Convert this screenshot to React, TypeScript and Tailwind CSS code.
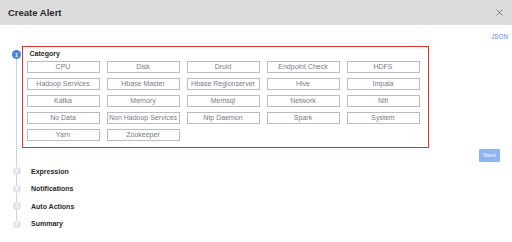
import React from "react";

const categories = [
  "CPU", "Disk", "Druid", "Endpoint Check", "HDFS",
  "Hadoop Services", "Hbase Master", "Hbase Regionserver", "Hive", "Impala",
  "Kafka", "Memory", "Memsql", "Network", "Nifi",
  "No Data", "Non Hadoop Services", "Ntp Daemon", "Spark", "System",
  "Yarn", "Zookeeper",
];

const steps = ["Expression", "Notifications", "Auto Actions", "Summary"];

export default function App() {
  return (
    <div className="w-[512px] h-[242px] bg-white overflow-hidden font-['Liberation_Sans',Arial,sans-serif]">
      <div className="h-[25px] bg-[#dcdcdc] flex items-center justify-between pl-[8px] pr-[9px]">
        <span className="text-[9.5px] font-bold text-[#2a2a2a] leading-none">Create Alert</span>
        <svg width="7" height="7" viewBox="0 0 7 7" className="text-[#666]">
          <path d="M0.5 0.5 L6.5 6.5 M6.5 0.5 L0.5 6.5" stroke="currentColor" strokeWidth="0.8" />
        </svg>
      </div>
      <div className="flex justify-end pr-[4px] pt-[9px] h-[21px]">
        <span className="text-[6.3px] leading-[6px] text-[#5b8def]">JSON</span>
      </div>
      <div className="pl-[12px] pr-[12px]">
        <div className="flex">
          <div className="w-[9px] flex flex-col items-center">
            <div className="h-[4px]" />
            <div className="w-[9px] h-[9px] rounded-full bg-[#4a80e4] text-white text-[6px] font-bold flex items-center justify-center leading-none">1</div>
            <div className="flex-1 w-px bg-[#c4d4f2]" />
          </div>
          <div className="ml-[1px] flex-1">
            <div className="w-[407px] border-[1.5px] border-[#e2342f] pt-[2.5px] pb-[6px] pl-[3.5px]">
              <div className="h-[8px] leading-[8px] text-[7px] font-bold text-[#2a2a2a] ml-[3px]">Category</div>
              <div className="mt-[3px] grid grid-cols-[repeat(5,73px)] gap-x-[7px] gap-y-[5px]">
                {categories.map((c) => (
                  <div
                    key={c}
                    className="h-[12px] border border-[#b8bcc4] flex items-center justify-center text-[7px] leading-none text-[#777c88]"
                  >
                    {c}
                  </div>
                ))}
              </div>
            </div>
            <div className="flex justify-end mt-[1px] mb-[1px]">
              <div className="w-[21px] h-[13px] bg-[#8fb3f5] rounded-[1px] text-white text-[6px] flex items-center justify-center leading-none">Next</div>
            </div>
          </div>
        </div>
        {steps.map((s, i) => (
          <div key={s} className="flex h-[17.5px]">
            <div className="w-[9px] flex flex-col items-center">
              <div className="flex-1 w-px bg-[#c4d4f2]" />
              <div className="w-[8px] h-[8px] rounded-full bg-[#e3e3e3] text-white text-[5.5px] font-bold flex items-center justify-center leading-none">{i + 2}</div>
              <div className={i === steps.length - 1 ? "flex-1 w-px" : "flex-1 w-px bg-[#c4d4f2]"} />
            </div>
            <div className="ml-[10px] flex items-center text-[7px] font-bold text-[#2a2a2a] leading-none">{s}</div>
          </div>
        ))}
      </div>
    </div>
  );
}
